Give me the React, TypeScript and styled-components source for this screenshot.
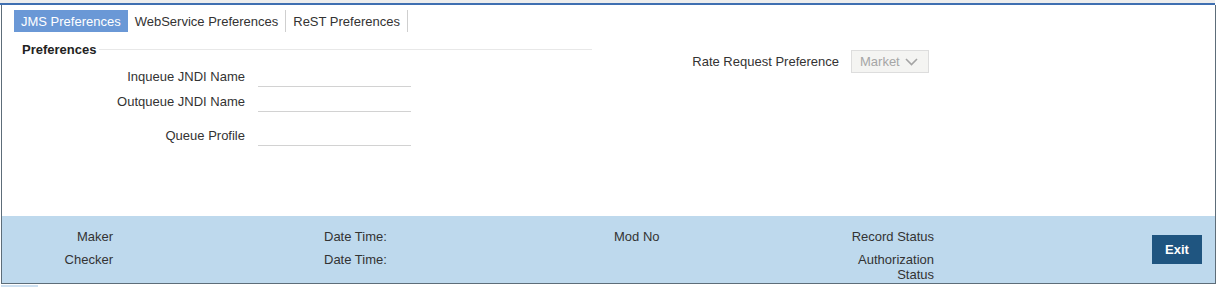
import React from 'react';
import styled, { createGlobalStyle } from 'styled-components';

const GlobalStyle = createGlobalStyle`
  body {
    margin: 0;
    background: #ffffff;
    font-family: "Liberation Sans", Arial, sans-serif;
    font-size: 13px;
    color: #333333;
  }
`;

const tabs = ['JMS Preferences', 'WebService Preferences', 'ReST Preferences'];

const fields = [
  { label: 'Inqueue JNDI Name', spaced: false },
  { label: 'Outqueue JNDI Name', spaced: false },
  { label: 'Queue Profile', spaced: true },
];

const App = () => {
  return (
    <>
      <GlobalStyle />
      <TopStrip />
      <Frame>
        <Body>
          <TabBar>
            {tabs.map((t, i) => (
              <Tab key={t} active={i === 0}>
                {t}
              </Tab>
            ))}
          </TabBar>
          <Columns>
            <LeftColumn>
              <Legend>
                <LegendText>Preferences</LegendText>
                <LegendLine />
              </Legend>
              {fields.map((f) => (
                <FieldRow key={f.label} spaced={f.spaced}>
                  <FieldLabel>{f.label}</FieldLabel>
                  <TextInput />
                </FieldRow>
              ))}
            </LeftColumn>
            <RightColumn>
              <SelectLabel>Rate Request Preference</SelectLabel>
              <SelectBox>
                <span>Market</span>
                <svg width="13" height="8" viewBox="0 0 13 8">
                  <polyline
                    points="1,1 6.5,6.5 12,1"
                    fill="none"
                    stroke="#a4a4a4"
                    strokeWidth="1.6"
                  />
                </svg>
              </SelectBox>
            </RightColumn>
          </Columns>
        </Body>
        <Footer>
          <FooterCol width={111} align="right">
            <FooterText>Maker</FooterText>
            <FooterText>Checker</FooterText>
          </FooterCol>
          <FooterCol width={290} offset={211}>
            <FooterText>Date Time:</FooterText>
            <FooterText>Date Time:</FooterText>
          </FooterCol>
          <FooterCol width={236}>
            <FooterText>Mod No</FooterText>
          </FooterCol>
          <FooterCol width={84} align="right">
            <FooterText nowrap>Record Status</FooterText>
            <FooterText>Authorization Status</FooterText>
          </FooterCol>
          <ExitButton>Exit</ExitButton>
        </Footer>
      </Frame>
      <Stub />
    </>
  );
};

export default App;

const TopStrip = styled.div`
  width: 1215px;
  height: 3px;
  background: #ededed;
  border-bottom: 2px solid #3f6fb1;
`;

const Frame = styled.div`
  margin-left: 1px;
  width: 1213px;
  border-left: 1px solid #5d6d79;
  border-right: 1px solid #5d6d79;
  border-bottom: 1px solid #5d6d79;
`;

const Body = styled.div`
  height: 211px;
  padding: 5px 0 0 12px;
  box-sizing: border-box;
`;

const TabBar = styled.div`
  display: flex;
  height: 22px;
`;

const Tab = styled.div<{ active?: boolean }>`
  display: flex;
  align-items: center;
  padding: 0 7px;
  height: 22px;
  background: ${(p) => (p.active ? '#6a98d6' : 'transparent')};
  color: ${(p) => (p.active ? '#ffffff' : '#333333')};
  border-right: ${(p) => (p.active ? 'none' : '1px solid #cfcfcf')};
  font-size: 13px;
  white-space: nowrap;
`;

const Columns = styled.div`
  display: flex;
`;

const LeftColumn = styled.div`
  width: 578px;
  padding-top: 9px;
`;

const Legend = styled.div`
  display: flex;
  align-items: center;
  padding-left: 8px;
  height: 16px;
  margin-bottom: 9px;
`;

const LegendText = styled.span`
  font-weight: bold;
  color: #222222;
  margin-right: 3px;
`;

const LegendLine = styled.div`
  flex: 1;
  height: 1px;
  background: #e8e8e8;
`;

const FieldRow = styled.div<{ spaced?: boolean }>`
  display: flex;
  align-items: center;
  height: 21px;
  margin-top: ${(p) => (p.spaced ? 13 : 4)}px;
  &:first-of-type {
    margin-top: 0;
  }
`;

const FieldLabel = styled.label`
  width: 231px;
  text-align: right;
  margin-right: 13px;
  color: #333333;
`;

const TextInput = styled.div`
  width: 153px;
  height: 20px;
  border-bottom: 1px solid #d2d2d2;
  align-self: flex-start;
`;

const RightColumn = styled.div`
  display: flex;
  align-items: center;
  margin-top: 18px;
  height: 23px;
`;

const SelectLabel = styled.span`
  width: 247px;
  text-align: right;
  margin-right: 12px;
  color: #333333;
`;

const SelectBox = styled.div`
  display: flex;
  align-items: center;
  justify-content: space-between;
  box-sizing: border-box;
  width: 78px;
  height: 23px;
  padding: 0 10px 0 8px;
  background: #f4f4f2;
  border: 1px solid #dddddd;
  color: #a6a6a6;
`;

const Footer = styled.div`
  display: flex;
  align-items: flex-start;
  height: 67px;
  box-sizing: border-box;
  padding-top: 13px;
  background: #bed9ed;
`;

const FooterCol = styled.div<{ width: number; offset?: number; align?: string }>`
  display: flex;
  flex-direction: column;
  gap: 8px;
  width: ${(p) => p.width}px;
  margin-left: ${(p) => p.offset ?? 0}px;
  text-align: ${(p) => p.align ?? 'left'};
  flex-shrink: 0;
`;

const FooterText = styled.div<{ nowrap?: boolean }>`
  line-height: 15px;
  color: #333333;
  white-space: ${(p) => (p.nowrap ? 'nowrap' : 'normal')};
`;

const ExitButton = styled.button`
  margin: 6px 0 0 218px;
  width: 50px;
  height: 29px;
  border: none;
  background: #1f5580;
  color: #ffffff;
  font-family: "Liberation Sans", Arial, sans-serif;
  font-weight: bold;
  font-size: 13px;
  padding: 0;
`;

const Stub = styled.div`
  margin: 1px 0 0 1px;
  width: 37px;
  height: 3px;
  background: #cde0f1;
`;
